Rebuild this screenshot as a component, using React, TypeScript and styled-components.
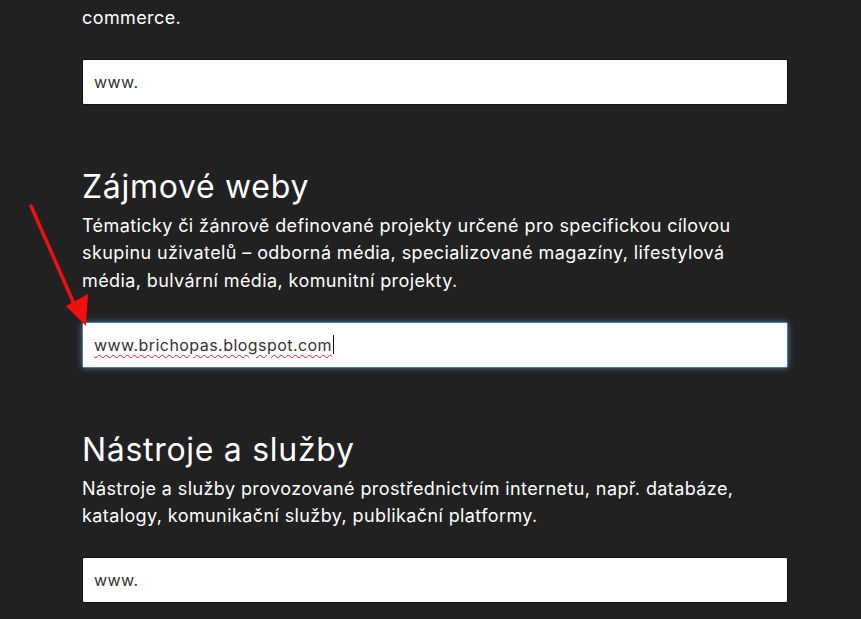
import { FC } from "react";
import styled, { createGlobalStyle } from "styled-components";

const GlobalStyle = createGlobalStyle`
  html, body {
    margin: 0;
    padding: 0;
    background: #212121;
    overflow: hidden;
  }
  body {
    font-family: Inter, "Noto Sans", sans-serif;
    color: #fff;
  }
`;

interface Section {
  title: string;
  text: string;
  value: string;
  focused?: boolean;
}

const sections: Section[] = [
  {
    title: "Zájmové weby",
    text: "Tématicky či žánrově definované projekty určené pro specifickou cílovou skupinu uživatelů – odborná média, specializované magazíny, lifestylová média, bulvární média, komunitní projekty.",
    value: "www.brichopas.blogspot.com",
    focused: true,
  },
  {
    title: "Nástroje a služby",
    text: "Nástroje a služby provozované prostřednictvím internetu, např. databáze, katalogy, komunikační služby, publikační platformy.",
    value: "www.",
  },
];

const App: FC = () => {
  return (
    <Page>
      <GlobalStyle />
      <Form>
        <Block>
          <Lead>
            Firemní prezentace, produktové weby, rezervační systémy a služby
            e-commerce.
          </Lead>
          <Field defaultValue="www." />
        </Block>
        {sections.map(({ title, text, value, focused }) => (
          <Block key={title}>
            <Title>{title}</Title>
            <Description>{text}</Description>
            {focused ? (
              <ActiveField>
                <Typed>{value}</Typed>
                <Caret />
              </ActiveField>
            ) : (
              <Field defaultValue={value} />
            )}
          </Block>
        ))}
      </Form>
      {/* annotation arrow over the page */}
      <Arrow width="100" height="140" viewBox="0 0 100 140">
        <line x1="31" y1="10" x2="75" y2="110" stroke="#f01010" strokeWidth="3.5" strokeLinecap="round" />
        <polygon points="66,110 88,98 86,130" fill="#f01010" />
      </Arrow>
    </Page>
  );
};

export default App;

const Page = styled.div`
  position: relative;
  width: 861px;
  height: 619px;
  overflow: hidden;
`;

const Form = styled.div`
  width: 706px;
  margin: -24px 0 0 82px;
  display: flex;
  flex-direction: column;
  gap: 63px;
`;

const Block = styled.div`
  display: flex;
  flex-direction: column;
`;

const Lead = styled.p`
  margin: 0 0 27.5px;
  font-size: 18px;
  line-height: 27.5px;
  letter-spacing: 0.4px;
`;

const Title = styled.h2`
  margin: 0 0 6px;
  font-size: 32px;
  font-weight: 400;
  line-height: 38px;
  letter-spacing: 0.7px;
`;

const Description = styled.p`
  margin: 0 0 27.5px;
  font-size: 18px;
  line-height: 27.5px;
  letter-spacing: 0.4px;
`;

const Field = styled.input`
  box-sizing: border-box;
  width: 100%;
  height: 46px;
  padding: 0 11px;
  border: 1px solid #111;
  border-radius: 2px;
  background: #fff;
  color: #333;
  font-family: Inter, "Noto Sans", sans-serif;
  font-size: 16px;
  letter-spacing: 0.45px;
  outline: none;
`;

const ActiveField = styled.div`
  box-sizing: border-box;
  width: 100%;
  height: 46px;
  padding: 0 11px;
  display: flex;
  align-items: center;
  border: 1px solid #3f7fbf;
  border-radius: 2px;
  background: #fff;
  box-shadow: 0 0 6px rgba(120, 180, 235, 0.55);
  color: #333;
  font-size: 16px;
  letter-spacing: 0.45px;
`;

const Typed = styled.span`
  text-decoration: underline wavy #d42020;
  text-decoration-thickness: 1px;
  text-underline-offset: 3px;
`;

const Caret = styled.span`
  width: 1px;
  height: 19px;
  margin-left: 1px;
  background: #111;
`;

const Arrow = styled.svg`
  position: absolute;
  left: 0;
  top: 196px;
`;
